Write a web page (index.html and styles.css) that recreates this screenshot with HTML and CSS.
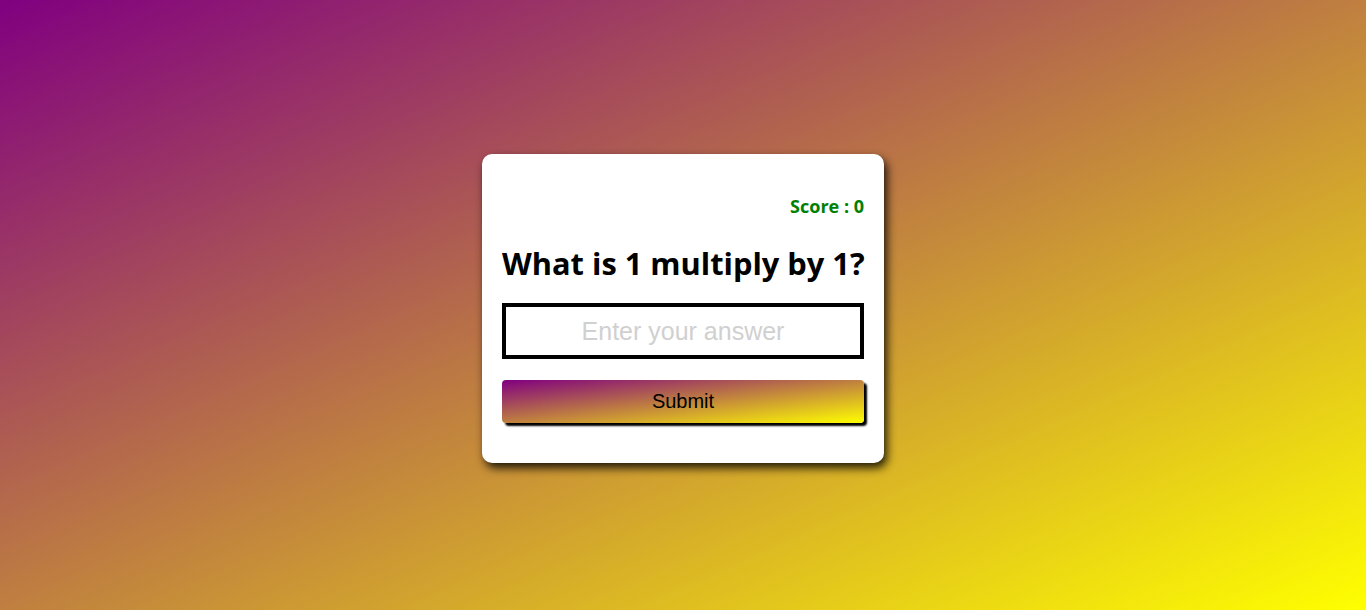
FILE: index.html
```html
<!DOCTYPE html>
<html>
<head>
<meta charset="utf-8">
<link rel="stylesheet" href="styles.css">
</head>
<body>
<div class="page">
  <form class="card">
    <p class="score">Score : 0</p>
    <h1 class="question">What is 1 multiply by 1?</h1>
    <input class="answer" type="text" placeholder="Enter your answer">
    <button class="submit" type="button">Submit</button>
  </form>
</div>
</body>
</html>
```
FILE: styles.css
```css
html, body {
  margin: 0;
  padding: 0;
  height: 100%;
}
body {
  background: linear-gradient(to bottom right, #800080, #ffff00);
  font-family: "Open Sans", "Noto Sans", sans-serif;
}
.page {
  box-sizing: border-box;
  height: 610px;
  padding-top: 7px;
  display: flex;
  justify-content: center;
  align-items: center;
}
.card {
  width: 362px;
  padding: 20px 20px 40px;
  background: #fff;
  border-radius: 10px;
  box-shadow: 3px 5px 10px rgba(0, 0, 0, 0.85);
  display: flex;
  flex-direction: column;
}
.score {
  margin: 20px 0 0;
  text-align: right;
  color: #008000;
  font-weight: 700;
  font-size: 18px;
  line-height: 24px;
}
.question {
  margin: 25px 0 20px;
  font-size: 30.8px;
  font-weight: 700;
  line-height: 40px;
  text-align: center;
  white-space: nowrap;
  color: #000;
}
.answer {
  box-sizing: border-box;
  width: 362px;
  height: 56px;
  border: 4px solid #000;
  outline: none;
  text-align: center;
  font-family: "Liberation Sans", Arial, sans-serif;
  font-size: 25px;
  padding: 0;
}
.answer::placeholder {
  color: #d0d0d0;
}
.submit {
  margin-top: 21px;
  width: 362px;
  height: 43px;
  border: none;
  border-radius: 4px;
  background: linear-gradient(to bottom right, #800080, #ffff00);
  box-shadow: 3px 3px 2px #000;
  font-family: "Liberation Sans", Arial, sans-serif;
  font-size: 20px;
  color: #000;
}
```
